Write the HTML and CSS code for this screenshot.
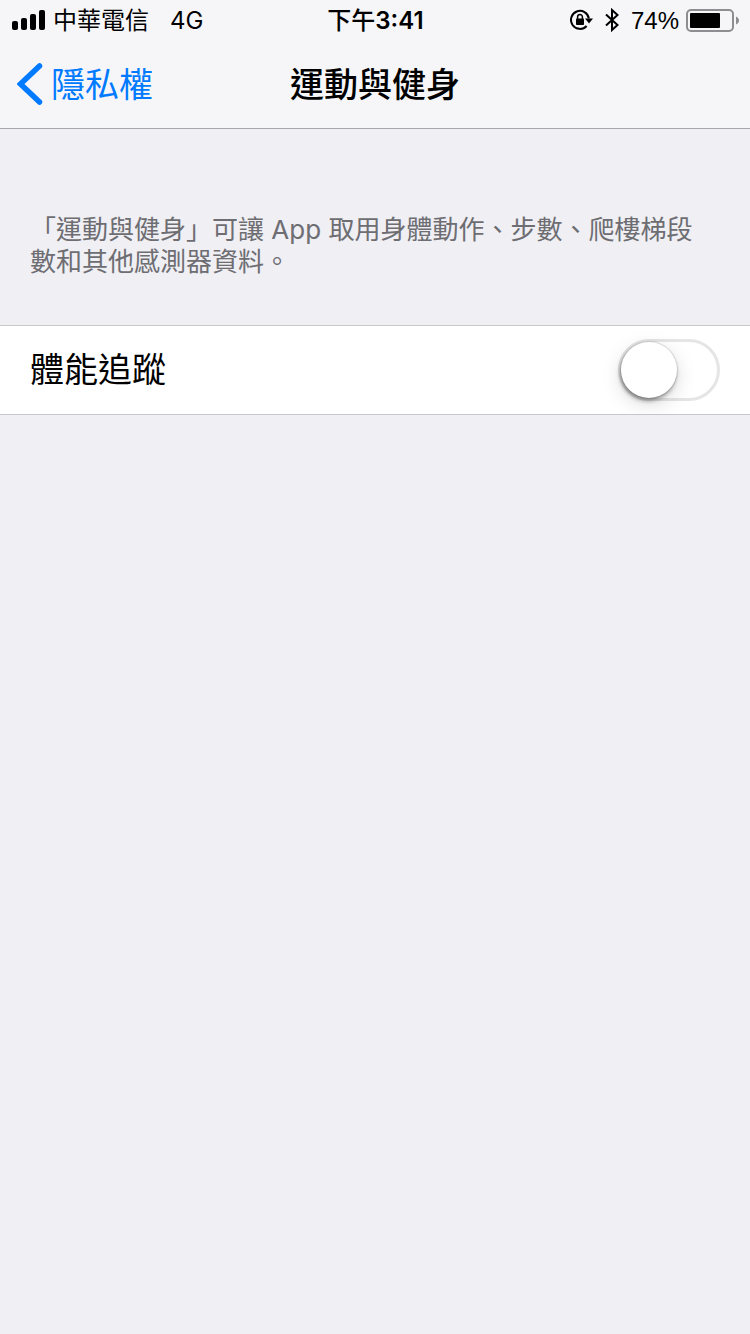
FILE: index.html
```html
<!DOCTYPE html>
<html lang="zh-Hant">
<head>
    <meta charset="UTF-8">
    <meta name="viewport" content="width=device-width, initial-scale=1.0">
    <title>運動與健身</title>
    <link rel="stylesheet" href="styles.css">
</head>
<body>

    <header class="top-bar">
        <div class="status-bar">
            <div class="status-left">
                <svg class="signal" width="34" height="20" viewBox="0 0 34 20">
                    <rect x="0" y="11" width="6" height="9" rx="2"/>
                    <rect x="9" y="8" width="6" height="12" rx="2"/>
                    <rect x="18" y="4" width="6" height="16" rx="2"/>
                    <rect x="27" y="0" width="6" height="20" rx="2"/>
                </svg>
                <span class="carrier">中華電信</span>
                <span class="network">4G</span>
            </div>
            <div class="status-time"><span class="period">下午</span>3:41</div>
            <div class="status-right">
                <svg class="rotation-lock" width="23" height="22" viewBox="0 0 23 22">
                    <path d="M16.600 17A9 9 0 1 1 18.900 9.500" fill="none" stroke="#000" stroke-width="2"/>
                    <path d="M15 9.400h8l-4 5.200z"/>
                    <rect x="6" y="9.400" width="8" height="6.600" rx="0.800"/>
                    <path d="M7.600 10V8a2.400 2.400 0 0 1 4.800 0v2" fill="none" stroke="#000" stroke-width="1.500"/>
                </svg>
                <svg class="bluetooth" width="14" height="24" viewBox="0 0 14 24">
                    <path d="M1 6.500L12.500 17 7 22V2l5.500 5L1 17.500" fill="none" stroke="#000" stroke-width="2"/>
                </svg>
                <span class="percent">74%</span>
                <svg class="battery" width="53" height="23" viewBox="0 0 53 23">
                    <rect x="1" y="1" width="46" height="21" rx="4" fill="none" stroke="#8e8e91" stroke-width="2"/>
                    <rect x="4" y="4" width="30" height="15" rx="1"/>
                    <path d="M50 7.500c4 1.500 4 6.500 0 8z" fill="#8e8e91"/>
                </svg>
            </div>
        </div>
        <nav class="nav-bar">
            <a class="back" href="#">
                <svg width="26" height="42" viewBox="0 0 26 42">
                    <path d="M22.500 3L3.500 21l19 18" fill="none" stroke="#007aff" stroke-width="5.500" stroke-linecap="round"/>
                </svg>
                <span>隱私權</span>
            </a>
            <h1>運動與健身</h1>
        </nav>
    </header>

    <main>
        <p class="description">「運動與健身」可讓 App 取用身體動作、步數、爬樓梯段數和其他感測器資料。</p>
        <div class="setting-row">
            <label for="fitness">體能追蹤</label>
            <input type="checkbox" class="switch" id="fitness">
        </div>
    </main>

</body>
</html>
```
FILE: styles.css
```css
body {
    margin: 0;
    background: #efeff4;
    color: #000;
    font-family: Inter, "Noto Sans CJK TC", sans-serif;
}
.top-bar {
    background: #f6f6f8;
    border-bottom: 1px solid #a7a7ab;
}
.status-bar {
    display: grid;
    grid-template-columns: 1fr auto 1fr;
    align-items: center;
    height: 40px;
    padding: 0 11px 0 12px;
    font-size: 24px;
    line-height: 36px;
}
.status-left,
.status-right {
    display: flex;
    align-items: center;
}
.status-right {
    justify-content: flex-end;
}
.carrier,
.network,
.status-time,
.percent {
    padding-top: 2px;
}
.carrier {
    margin-left: 7px;
}
.network {
    margin-left: 21px;
}
.status-time {
    font-weight: 600;
}
.period {
    font-weight: 500;
}
.bluetooth {
    margin: 0 12px;
}
.percent {
    font-family: "Liberation Sans", Arial, sans-serif;
}
.battery {
    margin-left: 7px;
}
.nav-bar {
    display: grid;
    grid-template-columns: 1fr auto 1fr;
    align-items: center;
    height: 88px;
    padding: 0 17px;
}
.back {
    display: flex;
    align-items: center;
    gap: 8px;
    color: #007aff;
    text-decoration: none;
}
.back span,
.nav-bar h1,
.setting-row label {
    font-size: 34px;
    line-height: 48px;
}
.back span,
.nav-bar h1 {
    padding-top: 2px;
}
.nav-bar h1 {
    margin: 0;
    font-weight: 500;
}
.description {
    margin: 0;
    padding: 85px 40px 47px 30px;
    color: #6d6d72;
    font-size: 26px;
    line-height: 32px;
}
.setting-row {
    display: flex;
    justify-content: space-between;
    align-items: center;
    height: 88px;
    padding: 0 30px;
    background: #fff;
    border-top: 1px solid #c8c7cc;
    border-bottom: 1px solid #c8c7cc;
}
.switch {
    appearance: none;
    box-sizing: border-box;
    width: 102px;
    height: 62px;
    margin: 0;
    border: 3px solid #e5e5e5;
    border-radius: 31px;
    background: #fff;
    cursor: pointer;
}
.switch::before {
    content: "";
    display: block;
    width: 56px;
    height: 56px;
    border-radius: 50%;
    background: #fff;
    box-shadow: 0 0 1px 1px rgba(0, 0, 0, 0.1), -1px 3px 4px rgba(0, 0, 0, 0.35), 0 6px 20px rgba(0, 0, 0, 0.15);
}
.switch:checked {
    border-color: #4cd964;
    background: #4cd964;
}
.switch:checked::before {
    margin-left: 40px;
}
```
